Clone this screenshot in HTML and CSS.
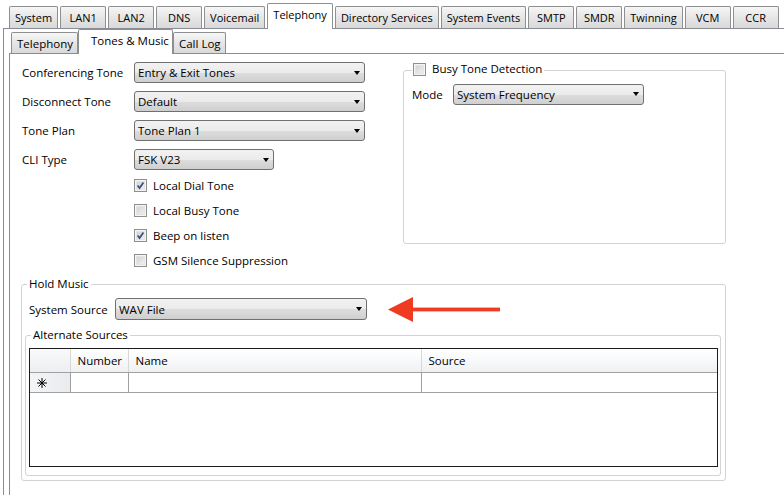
FILE: index.html
```html
<!DOCTYPE html>
<html>
<head>
<meta charset="utf-8">
<link rel="stylesheet" href="styles.css">
</head>
<body>
<div class="app">
  <div class="tabs">
    <div class="tab">System</div>
    <div class="tab">LAN1</div>
    <div class="tab">LAN2</div>
    <div class="tab">DNS</div>
    <div class="tab">Voicemail</div>
    <div class="tab active">Telephony</div>
    <div class="tab">Directory Services</div>
    <div class="tab">System Events</div>
    <div class="tab">SMTP</div>
    <div class="tab">SMDR</div>
    <div class="tab">Twinning</div>
    <div class="tab">VCM</div>
    <div class="tab">CCR</div>
  </div>
  <div class="outer-panel">
    <div class="subtabs">
      <div class="subtab">Telephony</div>
      <div class="subtab active">Tones &amp; Music</div>
      <div class="subtab">Call Log</div>
    </div>
    <div class="inner-panel">
      <div class="top">
        <div class="left">
          <div class="field"><span class="label">Conferencing Tone</span><div class="select wide">Entry &amp; Exit Tones</div></div>
          <div class="field"><span class="label">Disconnect Tone</span><div class="select wide">Default</div></div>
          <div class="field"><span class="label">Tone Plan</span><div class="select wide">Tone Plan 1</div></div>
          <div class="field"><span class="label">CLI Type</span><div class="select short">FSK V23</div></div>
          <div class="checks">
            <div class="check"><span class="box"><svg viewBox="0 0 13 13" width="13" height="13"><path d="M3.6 6.4 L5.6 9 L9.4 3.4" fill="none" stroke="#3a4c84" stroke-width="1.7"/></svg></span>Local Dial Tone</div>
            <div class="check"><span class="box"></span>Local Busy Tone</div>
            <div class="check"><span class="box"><svg viewBox="0 0 13 13" width="13" height="13"><path d="M3.6 6.4 L5.6 9 L9.4 3.4" fill="none" stroke="#3a4c84" stroke-width="1.7"/></svg></span>Beep on listen</div>
            <div class="check"><span class="box"></span>GSM Silence Suppression</div>
          </div>
        </div>
        <fieldset class="group busy">
          <legend><span class="legend-check"><span class="box"></span>Busy Tone Detection</span></legend>
          <div class="mode-row"><span class="mode-label">Mode</span><div class="select mode">System Frequency</div></div>
        </fieldset>
      </div>
      <fieldset class="group hold">
        <legend>Hold Music</legend>
        <div class="source-row">
          <span class="source-label">System Source</span>
          <div class="select source">WAV File</div>
          <svg class="pointer" width="112" height="25" viewBox="0 0 112 25">
            <polygon points="0,12.5 25,0 25,25" fill="#ee3b22"/>
            <rect x="24" y="10.6" width="88" height="3.8" fill="#ee3b22"/>
          </svg>
        </div>
        <fieldset class="group alt">
          <legend>Alternate Sources</legend>
          <div class="grid">
            <table>
              <colgroup><col class="c-row"><col class="c-num"><col class="c-name"><col></colgroup>
              <thead>
                <tr><th class="rowhead"></th><th>Number</th><th>Name</th><th>Source</th></tr>
              </thead>
              <tbody>
                <tr><td class="rowhead"><svg width="10" height="10" viewBox="0 0 10 10"><g stroke="#000" stroke-width="1"><line x1="5" y1="0" x2="5" y2="10"/><line x1="0" y1="5" x2="10" y2="5"/><line x1="1.5" y1="1.5" x2="8.5" y2="8.5"/><line x1="8.5" y1="1.5" x2="1.5" y2="8.5"/></g></svg></td><td></td><td></td><td></td></tr>
              </tbody>
            </table>
          </div>
        </fieldset>
      </fieldset>
    </div>
  </div>
</div>
</body>
</html>
```

FILE: styles.css
```css
html, body {
  margin: 0;
  background: #fff;
}
body {
  font-family: "Open Sans", "Segoe UI", sans-serif;
  font-size: 11.5px;
  color: #000;
  overflow: hidden;
}
.app {
  padding-top: 3px;
}
.tabs {
  display: flex;
  align-items: flex-end;
  height: 25px;
  margin-left: 9px;
  font-size: 11px;
}
.tab {
  box-sizing: border-box;
  height: 22px;
  min-width: 46px;
  padding: 0 5px;
  margin-right: 2px;
  border: 1px solid #8e8f8f;
  border-bottom: none;
  border-radius: 2px 2px 0 0;
  background: linear-gradient(#f6f6f6, #e6e6e6 50%, #d9d9d9);
  display: flex;
  align-items: center;
  justify-content: center;
  white-space: nowrap;
}
.tab.active {
  height: 26px;
  margin-bottom: -1px;
  background: #fff;
  position: relative;
  z-index: 1;
  padding-bottom: 4px;
}
.outer-panel {
  margin-left: 3px;
  border-top: 1px solid #898c95;
  border-left: 1px solid #898c95;
  height: 470px;
}
.subtabs {
  display: flex;
  align-items: flex-end;
  height: 24px;
  margin-left: 7px;
}
.subtab {
  box-sizing: border-box;
  height: 21px;
  padding: 0 4px 0 5px;
  border: 1px solid #8e8f8f;
  border-bottom: none;
  border-radius: 2px 2px 0 0;
  background: linear-gradient(#f6f6f6, #e6e6e6 50%, #d9d9d9);
  display: flex;
  align-items: center;
  white-space: nowrap;
}
.subtab.active {
  height: 25px;
  width: 95px;
  margin-bottom: -1px;
  padding: 0 3px 3px 12px;
  background: #fff;
  position: relative;
  z-index: 1;
}
.inner-panel {
  margin-left: 5px;
  border-top: 1px solid #898c95;
  border-left: 1px solid #898c95;
  padding: 8px 0 0 11px;
  height: 440px;
}
.top {
  display: flex;
  align-items: flex-start;
}
.left {
  box-sizing: border-box;
  width: 382px;
  padding-left: 1px;
}
.field {
  display: flex;
  align-items: center;
  height: 21px;
}
.field + .field {
  margin-top: 8px;
}
.label {
  width: 112px;
}
.select {
  box-sizing: border-box;
  height: 21px;
  border: 1px solid #707070;
  border-radius: 3px;
  padding: 0 4px 0 3px;
  background: linear-gradient(#f2f2f2, #ebebeb 50%, #dddddd 51%, #cfcfcf);
  display: flex;
  align-items: center;
  justify-content: space-between;
  white-space: nowrap;
}
.select::after {
  content: "";
  border-top: 4px solid #000;
  border-left: 3.5px solid transparent;
  border-right: 3.5px solid transparent;
}
.select.wide { width: 231px; }
.select.short { width: 140px; }
.select.mode { width: 191px; }
.select.source { width: 252px; height: 22px; }
.checks {
  margin-top: 3px;
}
.check {
  display: flex;
  align-items: center;
  height: 25px;
  margin-left: 112px;
  gap: 6px;
}
.box {
  box-sizing: border-box;
  width: 13px;
  height: 13px;
  border: 1px solid #8e8f8f;
  background: linear-gradient(135deg, #cdcdcd, #f6f6f6);
  box-shadow: inset 0 0 0 1px #f4f4f4, inset 0 0 0 2px #e4e4e4;
  display: inline-block;
  position: relative;
  flex: none;
}
.box svg {
  display: block;
  margin: -1px;
}
.group {
  margin: 0;
  min-width: 0;
  border: 1px solid #d3d3d3;
  border-radius: 3px;
  box-sizing: border-box;
}
.group legend {
  line-height: 16px;
}
.busy {
  margin-top: -1px;
  width: 323px;
  height: 183px;
  padding: 4px 8px 0 8px;
}
.busy legend {
  padding: 0 2px 0 1px;
}
.legend-check {
  display: inline-flex;
  align-items: center;
  gap: 6px;
}
.mode-row {
  display: flex;
  align-items: center;
}
.mode-label {
  width: 41px;
}
.hold {
  margin-top: 3px;
  width: 705px;
  padding: 6px 3px 4px 3px;
}
.hold > legend,
.alt > legend {
  margin-left: 2px;
  padding: 0 2px;
}
.source-row {
  display: flex;
  align-items: center;
  height: 22px;
  margin-left: 4px;
}
.source-label {
  width: 86px;
}
.pointer {
  display: block;
  margin-left: 21px;
}
.alt {
  margin: 7px 1px 0 0;
  padding: 5px 2px 8px 3px;
}
.grid {
  box-sizing: border-box;
  height: 119px;
  border: 1px solid #1c1c1c;
  background: #fff;
}
table {
  width: 100%;
  border-collapse: collapse;
  table-layout: fixed;
}
.c-row { width: 40px; }
.c-num { width: 58px; }
.c-name { width: 293px; }
th {
  height: 23px;
  padding: 0 0 0 7px;
  text-align: left;
  font-weight: normal;
  background: linear-gradient(#ffffff, #f7f8f9 50%, #eef0f2);
  border-bottom: 1px solid #a0a0a0;
  border-left: 1px solid #d8d8d8;
}
th:first-child, td:first-child {
  border-left: none;
}
td {
  height: 19px;
  padding: 0;
  border-bottom: 1px solid #a0a0a0;
  border-left: 1px solid #a0a0a0;
}
th.rowhead {
  background: linear-gradient(#f9fafb, #eceef1);
}
td.rowhead {
  background: linear-gradient(90deg, #f3f4f6, #e9ebee);
  padding-left: 7px;
  vertical-align: middle;
}
td.rowhead svg {
  display: block;
}
```
